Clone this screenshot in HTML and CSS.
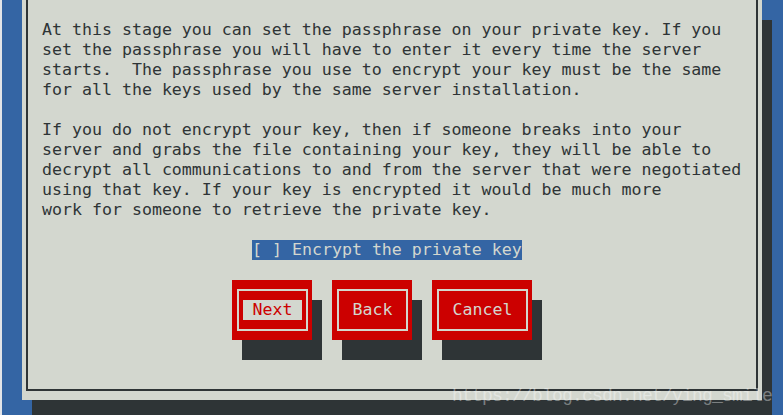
FILE: index.html
```html
<!DOCTYPE html>
<html>
<head>
<meta charset="utf-8">
<link rel="stylesheet" href="styles.css">
</head>
<body>
<div class="dialog">
  <div class="frame">
<p class="msg">At this stage you can set the passphrase on your private key. If you
set the passphrase you will have to enter it every time the server
starts.  The passphrase you use to encrypt your key must be the same
for all the keys used by the same server installation.

If you do not encrypt your key, then if someone breaks into your
server and grabs the file containing your key, they will be able to
decrypt all communications to and from the server that were negotiated
using that key. If your key is encrypted it would be much more
work for someone to retrieve the private key.</p>
    <div class="check"><span class="sel">[ ] Encrypt the private key</span></div>
    <div class="buttons">
      <div class="btn focus"><div class="inner"><span class="label"> Next </span></div></div>
      <div class="btn"><div class="inner"><span class="label"> Back </span></div></div>
      <div class="btn wide"><div class="inner"><span class="label"> Cancel </span></div></div>
    </div>
  </div>
</div>
<div class="watermark">https://blog.csdn.net/ying_smile</div>
</body>
</html>
```
FILE: styles.css
```css
html, body {
  margin: 0;
  height: 100%;
}
body {
  background: #3465a4;
  overflow: hidden;
  font-family: "DejaVu Sans Mono", monospace;
  font-size: 16.6px;
  line-height: 20px;
  border-left: 2px solid #e2e4e8;
  box-sizing: border-box;
  position: relative;
}
.dialog {
  margin-left: 20px;
  width: 740px;
  height: 400px;
  background: #d3d7cf;
  box-shadow: 10px 20px 0 #2e3436;
  padding: 0 4px 9px 4px;
  box-sizing: border-box;
}
.frame {
  height: 100%;
  border: 2px solid #2e3436;
  border-top: none;
  box-sizing: border-box;
  padding: 20px 0 0 14px;
}
.msg {
  margin: 0;
  white-space: pre;
  color: #2e3436;
}
.check {
  margin-top: 20px;
  padding-left: 210px;
  height: 20px;
}
.sel {
  display: inline-block;
  white-space: pre;
  background: #3465a4;
  color: #d3d7cf;
  line-height: 20px;
}
.buttons {
  display: flex;
  gap: 20px;
  margin-top: 20px;
  padding-left: 190px;
}
.btn {
  width: 80px;
  height: 60px;
  background: #cc0000;
  box-shadow: 10px 20px 0 #2e3436;
  padding: 9px 4px 9px 5px;
  box-sizing: border-box;
}
.btn.wide {
  width: 100px;
}
.inner {
  height: 100%;
  border: 2px solid #d3d7cf;
  box-sizing: border-box;
  display: flex;
  align-items: center;
  justify-content: center;
}
.label {
  white-space: pre;
  color: #d3d7cf;
  line-height: 20px;
}
.focus .label {
  background: #d3d7cf;
  color: #cc0000;
}
.watermark {
  position: absolute;
  left: 450px;
  top: 386px;
  font-family: "Liberation Mono", monospace;
  font-size: 18px;
  letter-spacing: -0.8px;
  line-height: 20px;
  color: rgba(255, 255, 255, 0.38);
  white-space: pre;
}
```
